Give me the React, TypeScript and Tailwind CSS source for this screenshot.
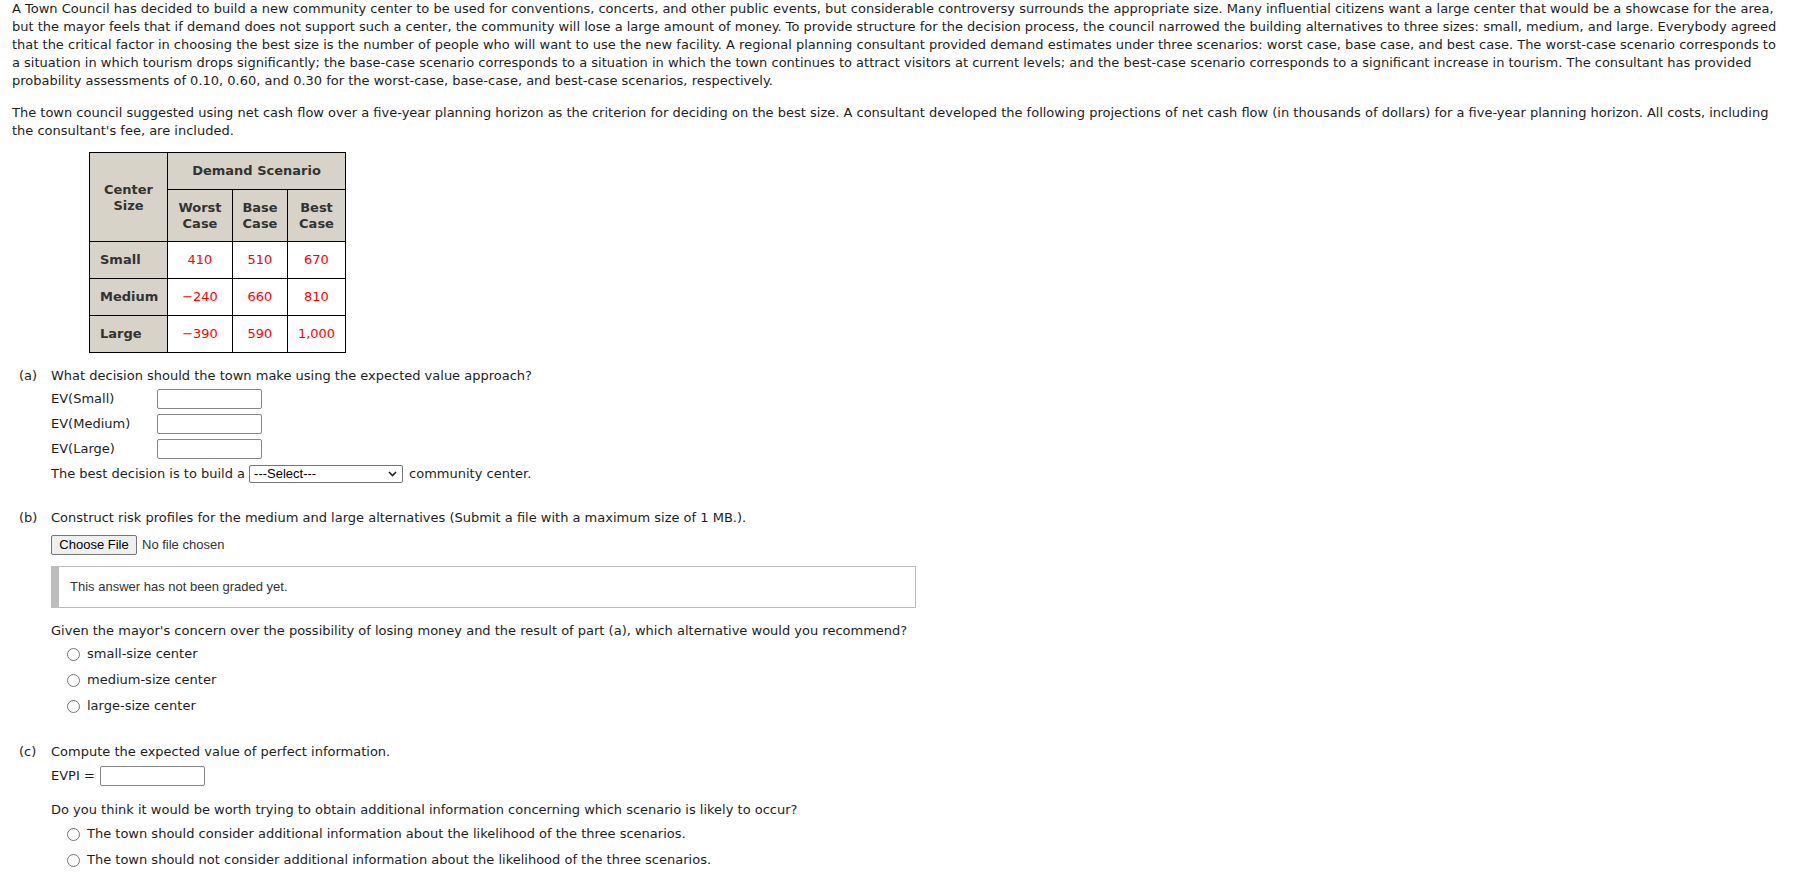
import React from 'react';

const para1 = [
  'A Town Council has decided to build a new community center to be used for conventions, concerts, and other public events, but considerable controversy surrounds the appropriate size. Many influential citizens want a large center that would be a showcase for the area,',
  'but the mayor feels that if demand does not support such a center, the community will lose a large amount of money. To provide structure for the decision process, the council narrowed the building alternatives to three sizes: small, medium, and large. Everybody agreed',
  'that the critical factor in choosing the best size is the number of people who will want to use the new facility. A regional planning consultant provided demand estimates under three scenarios: worst case, base case, and best case. The worst-case scenario corresponds to',
  'a situation in which tourism drops significantly; the base-case scenario corresponds to a situation in which the town continues to attract visitors at current levels; and the best-case scenario corresponds to a significant increase in tourism. The consultant has provided',
  'probability assessments of 0.10, 0.60, and 0.30 for the worst-case, base-case, and best-case scenarios, respectively.',
];

const para2 = [
  'The town council suggested using net cash flow over a five-year planning horizon as the criterion for deciding on the best size. A consultant developed the following projections of net cash flow (in thousands of dollars) for a five-year planning horizon. All costs, including',
  "the consultant's fee, are included.",
];

const rows = [
  { size: 'Small', values: ['410', '510', '670'] },
  { size: 'Medium', values: ['\u2212240', '660', '810'] },
  { size: 'Large', values: ['\u2212390', '590', '1,000'] },
];

const Radio = ({ label }: { label: string }) => (
  <div className="flex h-[26px] items-center pl-[16px]">
    <span className="box-border h-[13px] w-[13px] rounded-full border border-[#767676] bg-white" />
    <span className="ml-[7px]">{label}</span>
  </div>
);

const TextBox = ({ className = '' }: { className?: string }) => (
  <input
    type="text"
    className={'box-border h-[20px] w-[105px] rounded-[2px] border border-[#858585] bg-white ' + className}
  />
);

const Part = ({ tag, children }: { tag: string; children: React.ReactNode }) => (
  <div className="flex pl-[7px]">
    <div className="w-[32px] shrink-0">{tag}</div>
    <div className="flex-1">{children}</div>
  </div>
);

const App = () => {
  return (
    <div
      className="min-h-screen bg-white px-[12px] text-[13px] leading-[18px] text-[#1e1e1e]"
      style={{ fontFamily: '"DejaVu Sans", Verdana, sans-serif' }}
    >
      <p className="whitespace-nowrap">
        {para1.map((line, i) => (
          <span key={i} className="block">{line}</span>
        ))}
      </p>
      <p className="mt-[14px] whitespace-nowrap">
        {para2.map((line, i) => (
          <span key={i} className="block">{line}</span>
        ))}
      </p>

      <table className="ml-[77px] mt-[12px] border-collapse border border-black text-[#333] leading-[16px]">
        <tbody>
          <tr className="h-[37px]">
            <th rowSpan={2} className="w-[78px] border border-black bg-[#d7d3c8] pt-[1px] font-bold">
              Center<br />Size
            </th>
            <th colSpan={3} className="border border-black bg-[#d7d3c8] font-bold">
              Demand Scenario
            </th>
          </tr>
          <tr className="h-[52px]">
            <th className="w-[65px] border border-black bg-[#d7d3c8] font-bold">Worst<br />Case</th>
            <th className="w-[55px] border border-black bg-[#d7d3c8] font-bold">Base<br />Case</th>
            <th className="w-[58px] border border-black bg-[#d7d3c8] font-bold">Best<br />Case</th>
          </tr>
          {rows.map((r) => (
            <tr key={r.size} className="h-[37px]">
              <td className="border border-black bg-[#d7d3c8] pl-[10px] text-left font-bold">{r.size}</td>
              {r.values.map((v, i) => (
                <td key={i} className="border border-black bg-white text-center text-[#ff0000]">
                  {v}
                </td>
              ))}
            </tr>
          ))}
        </tbody>
      </table>

      <div className="mt-[14px]">
        <Part tag="(a)">
          <div>What decision should the town make using the expected value approach?</div>
          <div className="mt-[1px]">
            {['EV(Small)', 'EV(Medium)', 'EV(Large)'].map((l) => (
              <div key={l} className="flex h-[25px] items-center">
                <span className="w-[106px]">{l}</span>
                <TextBox />
              </div>
            ))}
            <div className="flex h-[25px] items-center">
              <span>The best decision is to build a</span>
              <div
                className="ml-[4px] box-border flex h-[18px] w-[154px] items-center justify-between rounded-[2px] border border-[#767676] bg-white pl-[4px] pr-[5px] text-[13px] text-black"
                style={{ fontFamily: '"Liberation Sans", Arial, sans-serif' }}
              >
                <span>---Select---</span>
                <svg width="9" height="6" viewBox="0 0 9 6">
                  <polyline points="1,1 4.5,4.5 8,1" fill="none" stroke="#222" strokeWidth="1.6" />
                </svg>
              </div>
              <span className="ml-[6px]">community center.</span>
            </div>
          </div>
        </Part>
      </div>

      <div className="mt-[23px]">
        <Part tag="(b)">
          <div>Construct risk profiles for the medium and large alternatives (Submit a file with a maximum size of 1 MB.).</div>
          <div
            className="mt-[8px] flex h-[20px] items-center text-[13px] text-black"
            style={{ fontFamily: '"Liberation Sans", Arial, sans-serif' }}
          >
            <span className="box-border flex h-[20px] w-[86px] items-center justify-center rounded-[2px] border border-[#767676] bg-[#efefef]">
              Choose File
            </span>
            <span className="ml-[5px] text-[#333]">No file chosen</span>
          </div>
          <div
            className="mt-[11px] box-border flex h-[42px] w-[865px] items-center border border-l-[8px] border-[#bdbdbd] pl-[11px] text-[13px] text-[#333]"
            style={{ fontFamily: '"Liberation Sans", Arial, sans-serif' }}
          >
            This answer has not been graded yet.
          </div>
          <div className="mt-[14px]">
            Given the mayor's concern over the possibility of losing money and the result of part (a), which alternative would you recommend?
          </div>
          <div className="mt-[1px]">
            <Radio label="small-size center" />
            <Radio label="medium-size center" />
            <Radio label="large-size center" />
          </div>
        </Part>
      </div>

      <div className="mt-[24px] pb-[16px]">
        <Part tag="(c)">
          <div>Compute the expected value of perfect information.</div>
          <div className="mt-[5px] flex h-[20px] items-center">
            <span>EVPI =</span>
            <TextBox className="ml-[5px]" />
          </div>
          <div className="mt-[15px]">
            Do you think it would be worth trying to obtain additional information concerning which scenario is likely to occur?
          </div>
          <div className="mt-[2px]">
            <Radio label="The town should consider additional information about the likelihood of the three scenarios." />
            <Radio label="The town should not consider additional information about the likelihood of the three scenarios." />
          </div>
        </Part>
      </div>
    </div>
  );
};

export default App;
